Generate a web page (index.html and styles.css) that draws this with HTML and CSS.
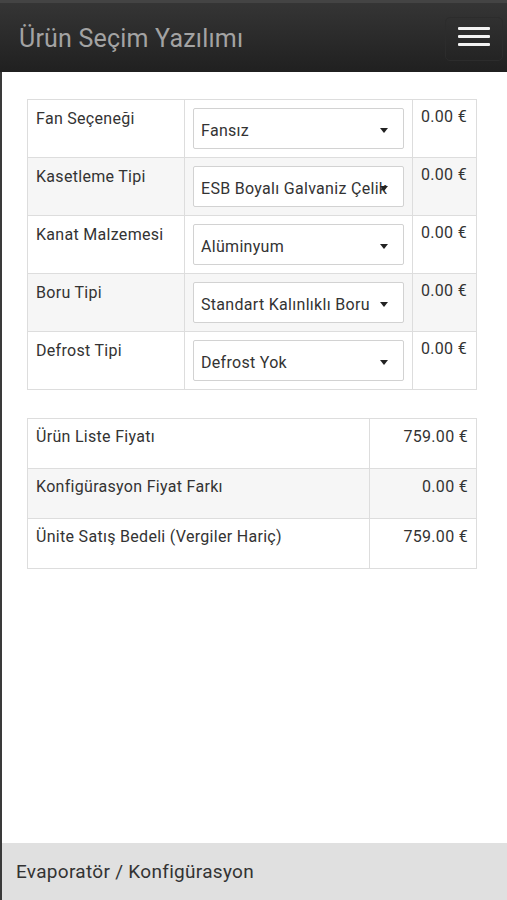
FILE: index.html
```html
<!DOCTYPE html>
<html lang="tr">
<head>
    <meta charset="UTF-8">
    <meta name="viewport" content="width=device-width, initial-scale=1.0">
    <title>Ürün Seçim Yazılımı</title>
    <link rel="stylesheet" href="styles.css">
</head>
<body>
    <div class="page">
        <!-- üst menü -->
        <div class="navbar">
            <span class="brand">Ürün Seçim Yazılımı</span>
            <div class="toggle">
                <span class="bar"></span>
                <span class="bar"></span>
                <span class="bar"></span>
            </div>
        </div>

        <div class="content">
            <!-- seçenekler -->
            <table class="options">
                <tr>
                    <td class="label">Fan Seçeneği</td>
                    <td class="choice"><div class="select"><span class="val">Fansız</span><span class="caret"></span></div></td>
                    <td class="price">0.00 €</td>
                </tr>
                <tr>
                    <td class="label">Kasetleme Tipi</td>
                    <td class="choice"><div class="select"><span class="val">ESB Boyalı Galvaniz Çelik</span><span class="caret"></span></div></td>
                    <td class="price">0.00 €</td>
                </tr>
                <tr>
                    <td class="label">Kanat Malzemesi</td>
                    <td class="choice"><div class="select"><span class="val">Alüminyum</span><span class="caret"></span></div></td>
                    <td class="price">0.00 €</td>
                </tr>
                <tr>
                    <td class="label">Boru Tipi</td>
                    <td class="choice"><div class="select"><span class="val">Standart Kalınlıklı Boru</span><span class="caret"></span></div></td>
                    <td class="price">0.00 €</td>
                </tr>
                <tr>
                    <td class="label">Defrost Tipi</td>
                    <td class="choice"><div class="select"><span class="val">Defrost Yok</span><span class="caret"></span></div></td>
                    <td class="price">0.00 €</td>
                </tr>
            </table>

            <!-- fiyat özeti -->
            <table class="totals">
                <tr>
                    <td>Ürün Liste Fiyatı</td>
                    <td class="amount">759.00 €</td>
                </tr>
                <tr>
                    <td>Konfigürasyon Fiyat Farkı</td>
                    <td class="amount">0.00 €</td>
                </tr>
                <tr>
                    <td>Ünite Satış Bedeli (Vergiler Hariç)</td>
                    <td class="amount">759.00 €</td>
                </tr>
            </table>
        </div>

        <div class="footer">Evaporatör / Konfigürasyon</div>
    </div>
</body>
</html>
```

FILE: styles.css
```css
html, body {
    margin: 0;
    height: 100%;
}
body {
    font-family: Roboto, "Liberation Sans", Arial, sans-serif;
    color: #333;
    background-color: #fff;
    letter-spacing: 0.3px;
}
.page {
    display: flex;
    flex-direction: column;
    height: 900px;
    border-left: 2px solid #3a3a3a;
    box-sizing: border-box;
}
.navbar {
    height: 72px;
    margin-left: -2px;
    flex-shrink: 0;
    display: flex;
    align-items: center;
    justify-content: space-between;
    padding: 0 16px 0 19px;
    background: linear-gradient(#353535, #202020);
    border-top: 3px solid #444;
    box-sizing: border-box;
}
.brand {
    font-size: 25px;
    letter-spacing: 0.2px;
    color: #a3a3a3;
    margin-top: 2px;
}
.toggle {
    width: 32px;
    display: flex;
    flex-direction: column;
    gap: 5px;
    padding: 9px 12px 14px 12px;
    margin-top: 2px;
    border: 1px solid #2c2c2c;
    border-radius: 5px;
    margin-right: -12px;
}
.bar {
    display: block;
    height: 3px;
    background-color: #f2f2f2;
    border-radius: 1px;
}
.content {
    flex: 1;
    padding: 27px 30px 0 25px;
}
table {
    width: 450px;
    border-collapse: collapse;
    font-size: 16px;
}
td {
    border: 1px solid #ddd;
    padding: 8px;
    vertical-align: top;
    line-height: 22px;
}
tr:nth-child(even) td {
    background-color: #f6f6f6;
}
.options .label {
    width: 140px;
}
.options .choice {
    width: 211px;
}
.options .price {
    padding-top: 6px;
}
.select {
    position: relative;
    height: 41px;
    border: 1px solid #d2d2d2;
    border-radius: 2px;
    background-color: #fff;
    box-sizing: border-box;
    display: flex;
    align-items: center;
    padding: 4px 0 0 7px;
    overflow: hidden;
    white-space: nowrap;
}
.caret {
    position: absolute;
    right: 15px;
    top: 19px;
    width: 0;
    height: 0;
    border-left: 4px solid transparent;
    border-right: 4px solid transparent;
    border-top: 5px solid #222;
}
.totals {
    margin-top: 28px;
}
.totals td {
    height: 34px;
    padding-top: 7px;
}
.totals .amount {
    width: 90px;
    text-align: right;
}
.footer {
    height: 57px;
    flex-shrink: 0;
    display: flex;
    align-items: center;
    padding-left: 14px;
    background-color: #e0e0e0;
    font-size: 19px;
    color: #333;
}
```
